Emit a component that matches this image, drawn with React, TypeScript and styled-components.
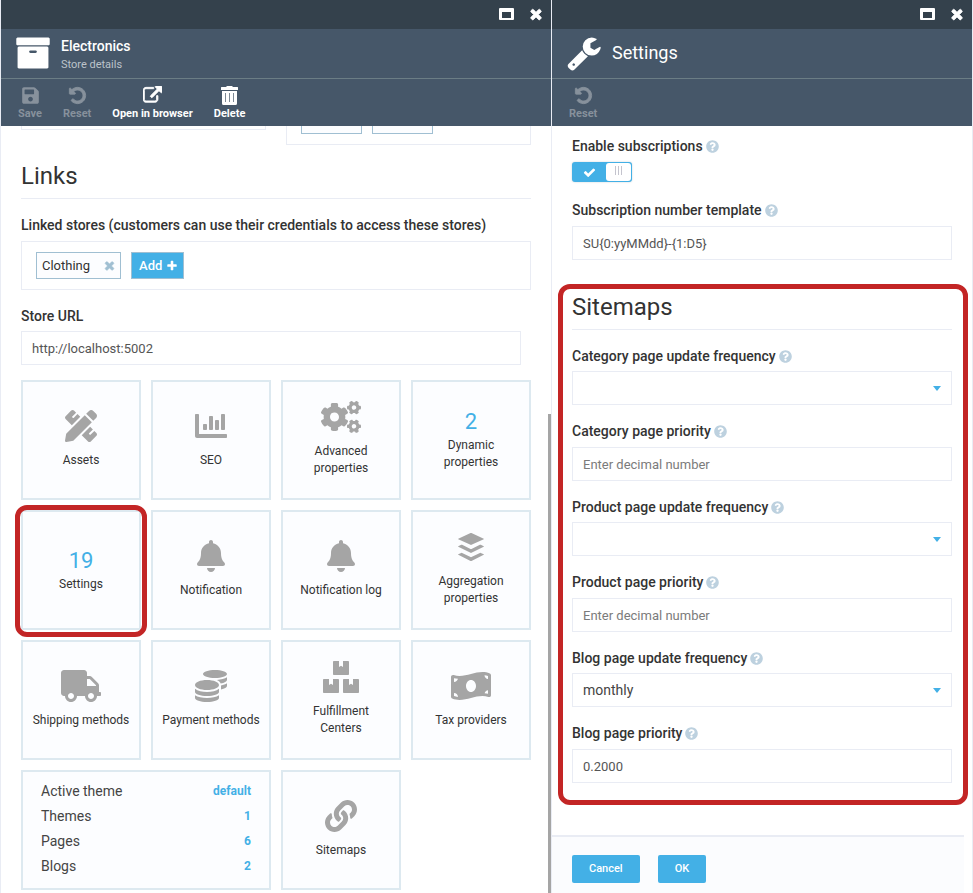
import React from "react";
import styled, { createGlobalStyle, css } from "styled-components";
import {
  FaBell,
  FaBoxes,
  FaBuffer,
  FaChartBar,
  FaCogs,
  FaCoins,
  FaLink,
  FaMoneyBillWave,
  FaPencilRuler,
  FaQuestionCircle,
  FaSave,
  FaTruck,
} from "react-icons/fa";

const color = {
  bar: "#34414c",
  head: "#465769",
  headLine: "#6b7d85",
  line: "#e9ecf4",
  tileLine: "#dde9f0",
  tileBg: "#fcfdff",
  blue: "#43b0e6",
  mist: "#bdd1df",
  chipLine: "#a0bfd2",
  icon: "#a5a5a5",
  text: "#333333",
  inputText: "#555555",
  red: "#c32525",
};

const GlobalStyle = createGlobalStyle`
  *, *::before, *::after { box-sizing: border-box; }
  body { margin: 0; background: #fff; color: ${color.text}; font: 14px/20px Roboto, "Liberation Sans", sans-serif; }
  button, input, select { font-family: inherit; margin: 0; }
  h1, h2, p { margin: 0; }
`;

const highlight = css`
  position: relative;
  &::after {
    content: "";
    position: absolute;
    border: 5px solid ${color.red};
    border-radius: 12px;
    pointer-events: none;
  }
`;

const Workspace = styled.main`
  display: grid;
  grid-template-columns: 551fr 422fr;
  height: 100vh;
  overflow: hidden;
`;

const Blade = styled.section<{ $last?: boolean }>`
  position: relative;
  display: flex;
  flex-direction: column;
  min-width: 0;
  min-height: 0;
  border-left: 1px solid ${color.line};
  border-right: ${(p) => (p.$last ? `1px solid ${color.line}` : "none")};
`;

const WindowBar = styled.div`
  display: flex;
  justify-content: flex-end;
  align-items: center;
  gap: 14px;
  height: 29px;
  flex: none;
  padding: 0 7px 2px;
  background: ${color.bar};
`;

const BarButton = styled.button`
  display: flex;
  padding: 0;
  border: 0;
  background: none;
  color: #fff;
  cursor: pointer;
`;

const BladeHead = styled.header`
  display: flex;
  align-items: center;
  gap: 10px;
  flex: none;
  height: 50px;
  padding: 0 14px 1px;
  border-bottom: 1px solid ${color.headLine};
  background: ${color.head};
  color: #fff;
`;

const Titles = styled.div`
  padding-top: 3px;
`;

const BladeTitle = styled.h1<{ $large?: boolean }>`
  font-size: ${(p) => (p.$large ? "18px" : "14px")};
  font-weight: ${(p) => (p.$large ? 400 : 500)};
  line-height: 20px;
`;

const BladeSubtitle = styled.p`
  font-size: 11px;
  line-height: 18px;
  color: #bcc3ca;
`;

const Toolbar = styled.div`
  display: flex;
  gap: 21px;
  flex: none;
  height: 47px;
  padding-left: 17px;
  background: ${color.head};
`;

const ToolButton = styled.button`
  display: flex;
  flex-direction: column;
  align-items: center;
  gap: 1px;
  padding: 6px 0 0;
  border: 0;
  background: none;
  color: #fff;
  font-size: 11px;
  font-weight: 700;
  line-height: 16px;
  cursor: pointer;
  &:disabled {
    color: #87919c;
    cursor: default;
  }
`;

const ToolIcon = styled.span`
  display: flex;
  align-items: center;
  height: 20px;
`;

const Content = styled.div`
  flex: 1;
  min-height: 0;
  padding: 0 20px;
  overflow: hidden;
`;

const SettingsContent = styled(Content)`
  padding-top: 10px;
  overflow: visible;
`;

const ScrollThumb = styled.div`
  position: absolute;
  right: 0;
  bottom: 0;
  top: 414px;
  width: 3px;
  background: #a5a5a5;
`;

const SplitRow = styled.div`
  display: grid;
  grid-template-columns: 1fr 1fr;
  align-items: start;
  gap: 20px;
`;

const CutBox = styled.div`
  display: flex;
  gap: 10px;
  min-height: 4px;
  padding: 0 14px;
  border: 1px solid ${color.line};
  border-top: 0;
`;

const CutBoxWithChips = styled(CutBox)`
  padding-bottom: 10px;
`;

const CutChip = styled.span`
  width: 61px;
  height: 8px;
  border: 1px solid ${color.chipLine};
  border-top: 0;
  background: ${color.tileBg};
`;

const SectionTitle = styled.h2`
  padding-bottom: 7px;
  margin-bottom: 16px;
  border-bottom: 1px solid ${color.line};
  font-size: 24px;
  font-weight: 400;
  line-height: 30px;
`;

const LinksSection = styled.div`
  padding-top: 16px;
`;

const FieldLabel = styled.label`
  display: flex;
  align-items: center;
  gap: 3px;
  font-size: 14px;
  font-weight: 500;
  line-height: 20px;
`;

const Help = styled(FaQuestionCircle)`
  color: ${color.mist};
  flex: none;
`;

const Field = styled.div<{ $gap: number; $after: number }>`
  display: flex;
  flex-direction: column;
  gap: ${(p) => p.$gap}px;
  margin-bottom: ${(p) => p.$after}px;
`;

const TextInput = styled.input`
  width: 100%;
  height: 34px;
  padding: 0 10px;
  border: 1px solid ${color.line};
  background: #fff;
  color: ${color.inputText};
  font-size: 13px;
  &::placeholder {
    color: #7b7b7b;
    opacity: 1;
  }
`;

const UrlInput = styled(TextInput)`
  width: calc(100% - 10px);
`;

const SelectWrap = styled.div`
  display: grid;
  align-items: center;
  > * {
    grid-area: 1 / 1;
  }
`;

const Select = styled.select`
  appearance: none;
  width: 100%;
  height: 34px;
  padding: 0 30px 1px 10px;
  border: 1px solid ${color.line};
  border-radius: 0;
  background: #fff;
  color: #444;
  font-size: 14px;
`;

const Caret = styled.svg`
  justify-self: end;
  margin-right: 11px;
  color: ${color.blue};
  pointer-events: none;
`;

const ChipBox = styled.div`
  display: flex;
  gap: 10px;
  padding: 10px 14px;
  border: 1px solid ${color.line};
`;

const Chip = styled.span`
  display: flex;
  align-items: center;
  gap: 13px;
  height: 27px;
  padding: 0 4px 0 5px;
  border: 1px solid ${color.chipLine};
  background: ${color.tileBg};
  font-size: 13px;
`;

const ChipRemove = styled(BarButton)`
  color: ${color.chipLine};
`;

const AddButton = styled.button`
  display: flex;
  align-items: center;
  gap: 4px;
  height: 27px;
  padding: 0 5px 0 7px;
  border: 1px solid ${color.chipLine};
  background: ${color.blue};
  color: #fff;
  font-size: 13px;
  font-weight: 500;
  cursor: pointer;
`;

const TileGrid = styled.div`
  display: grid;
  grid-template-columns: repeat(4, 1fr);
  grid-auto-rows: 120px;
  gap: 10px;
`;

const tileFrame = css`
  border: 2px solid ${color.tileLine};
  background: ${color.tileBg};
`;

const TileButton = styled.button<{ $marked?: boolean }>`
  ${tileFrame}
  display: flex;
  flex-direction: column;
  align-items: center;
  justify-content: center;
  padding: 0 6px 2px;
  color: ${color.text};
  font-size: 12px;
  line-height: 17px;
  cursor: pointer;
  ${(p) =>
    p.$marked &&
    css`
      ${highlight}
      &::after {
        inset: -7px -8px -9px;
      }
    `}
`;

const TileIcon = styled.span`
  display: flex;
  align-items: center;
  height: 32px;
  margin-bottom: 10px;
  color: ${color.icon};
`;

const TileCount = styled.span`
  color: ${color.blue};
  font-size: 22px;
  line-height: 30px;
`;

const TileLabel = styled.span`
  max-width: 100px;
`;

const ThemeTile = styled.div`
  ${tileFrame}
  grid-column: span 2;
  padding: 7px 18px;
`;

const ThemeRow = styled.div`
  display: flex;
  justify-content: space-between;
  line-height: 25px;
  color: #444;
`;

const ThemeLink = styled.a`
  color: ${color.blue};
  font-size: 12px;
  font-weight: 700;
  text-decoration: none;
`;

const Switch = styled.span`
  display: flex;
  align-items: center;
  width: 60px;
  height: 20px;
  padding: 1px;
  border-radius: 3px;
  background: ${color.blue};
  color: #fff;
  box-shadow: 0 0 2px #c9cdd2;
  position: relative;
`;

const SwitchInput = styled.input`
  position: absolute;
  inset: 0;
  width: 100%;
  height: 100%;
  margin: 0;
  opacity: 0;
  cursor: pointer;
`;

const SwitchOn = styled.span`
  display: flex;
  flex: 1;
  justify-content: center;
`;

const SwitchKnob = styled.span`
  display: flex;
  justify-content: center;
  gap: 2px;
  width: 25px;
  height: 18px;
  padding-top: 3px;
  border-radius: 3px;
  background: #fff;
`;

const Grip = styled.span`
  width: 1px;
  height: 9px;
  background: #c4c4ce;
`;

const MarkedSection = styled.div`
  ${highlight}
  margin-top: 32px;
  &::after {
    inset: -8px -16px -22px -14px;
  }
`;

const Footer = styled.footer`
  display: flex;
  gap: 18px;
  flex: none;
  margin-right: 8px;
  padding: 18px 20px 10px;
  border-top: 2px solid ${color.line};
  background: #fbfcfe;
`;

const FooterButton = styled.button`
  height: 28px;
  padding: 0 17px 1px;
  border: 0;
  border-radius: 2px;
  background: ${color.blue};
  color: #fff;
  font-size: 11px;
  font-weight: 500;
  cursor: pointer;
`;

const shapes = {
  times:
    "M1490 1322q0 40-28 68l-136 136q-28 28-68 28t-68-28l-294-294-294 294q-28 28-68 28t-68-28l-136-136q-28-28-28-68t28-68l294-294-294-294q-28-28-28-68t28-68l136-136q28-28 68-28t68 28l294 294 294-294q28-28 68-28t68 28l136 136q28 28 28 68t-28 68l-294 294 294 294q28 28 28 68z",
  archive:
    "M1088 832q0-26-19-45t-45-19h-256q-26 0-45 19t-19 45 19 45 45 19h256q26 0 45-19t19-45zm576-192v960q0 26-19 45t-45 19h-1408q-26 0-45-19t-19-45v-960q0-26 19-45t45-19h1408q26 0 45 19t19 45zm64-448v256q0 26-19 45t-45 19h-1536q-26 0-45-19t-19-45v-256q0-26 19-45t45-19h1536q26 0 45 19t19 45z",
  wrench:
    "M448 1472q0-26-19-45t-45-19-45 19-19 45 19 45 45 19 45-19 19-45zm644-420l-682 682q-37 37-90 37-52 0-91-37l-106-108q-38-36-38-90 0-53 38-91l681-681q39 98 114.500 173.500t173.500 114.500zm634-435q0 39-23 106-47 134-164.500 217.500t-258.500 83.500q-185 0-316.500-131.500t-131.500-316.500 131.500-316.500 316.500-131.500q58 0 121.500 16.500t107.500 46.500q16 11 16 28t-16 28l-293 169v224l193 107q5-3 79-48.500t135.500-81 70.500-35.500q15 0 23.500 10t8.500 25z",
  undo:
    "M1664 896q0 156-61 298t-164 245-245 164-298 61q-172 0-327-72.500t-264-204.500q-7-10-6.500-22.500t8.500-20.500l137-138q10-9 25-9 16 2 23 12 73 95 179 147t225 52q104 0 198.500-40.500t163.500-109.500 109.500-163.500 40.500-198.500-40.500-198.500-109.500-163.500-163.500-109.500-198.500-40.500q-98 0-188 35.500t-160 101.500l137 138q31 30 14 69-17 40-59 40h-448q-26 0-45-19t-19-45v-448q0-42 40-59 39-17 69 14l130 129q107-101 244.500-156.500t284.500-55.500q156 0 298 61t245 164 164 245 61 298z",
  external:
    "M1408 928v320q0 119-84.500 203.500t-203.500 84.500h-832q-119 0-203.500-84.500t-84.500-203.500v-832q0-119 84.500-203.500t203.500-84.500h704q14 0 23 9t9 23v64q0 14-9 23t-23 9h-704q-66 0-113 47t-47 113v832q0 66 47 113t113 47h832q66 0 113-47t47-113v-320q0-14 9-23t23-9h64q14 0 23 9t9 23zm384-864v512q0 26-19 45t-45 19-45-19l-176-176-652 652q-10 10-23 10t-23-10l-114-114q-10-10-10-23t10-23l652-652-176-176q-19-19-19-45t19-45 45-19h512q26 0 45 19t19 45z",
  plus:
    "M1600 736v192q0 40-28 68t-68 28h-416v416q0 40-28 68t-68 28h-192q-40 0-68-28t-28-68v-416h-416q-40 0-68-28t-28-68v-192q0-40 28-68t68-28h416v-416q0-40 28-68t68-28h192q40 0 68 28t28 68v416h416q40 0 68 28t28 68z",
  check:
    "M1671 566q0 40-28 68l-724 724-136 136q-28 28-68 28t-68-28l-136-136-362-362q-28-28-28-68t28-68l136-136q28-28 68-28t68 28l294 295 656-657q28-28 68-28t68 28l136 136q28 28 28 68z",
};

const Glyph = ({ name, size, bold }: { name: keyof typeof shapes; size: number; bold?: boolean }) => (
  <svg
    width={size}
    height={size}
    viewBox="0 0 1792 1792"
    fill="currentColor"
    stroke={bold ? "currentColor" : "none"}
    strokeWidth={80}
    aria-hidden="true"
  >
    <path d={shapes[name]} />
  </svg>
);

const MaximizeIcon = () => (
  <svg width="15" height="12" viewBox="0 0 15 12" fill="currentColor" fillRule="evenodd" aria-hidden="true">
    <path d="M1 0h13a1 1 0 0 1 1 1v10a1 1 0 0 1-1 1H1a1 1 0 0 1-1-1V1a1 1 0 0 1 1-1zM3 4v6h9V4z" />
  </svg>
);

const TrashIcon = () => (
  <svg width="17" height="19" viewBox="0 0 17 19" fillRule="evenodd" aria-hidden="true">
    <path
      fill="currentColor"
      d="M6 0h5l1 1h4.500a.5.5 0 0 1 .5.5V4H0V1.500A.5.5 0 0 1 .5 1H5zM1 5h15v12.500a1.500 1.500 0 0 1-1.500 1.500h-12A1.500 1.500 0 0 1 1 17.500z"
    />
    <path fill="#7d8995" d="M4 7h1v9H4zM8 7h1v9H8zM12 7h1v9h-1z" />
  </svg>
);

const WindowControls = () => (
  <WindowBar>
    <BarButton aria-label="Maximize">
      <MaximizeIcon />
    </BarButton>
    <BarButton aria-label="Close">
      <Glyph name="times" size={16} bold />
    </BarButton>
  </WindowBar>
);

const Tool = ({ label, disabled, children }: { label: string; disabled?: boolean; children: React.ReactNode }) => (
  <ToolButton disabled={disabled}>
    <ToolIcon>{children}</ToolIcon>
    {label}
  </ToolButton>
);

type TileProps = { label: string; icon?: React.ReactNode; count?: number; marked?: boolean };

const Tile = ({ label, icon, count, marked }: TileProps) => (
  <TileButton $marked={marked}>
    {icon ? <TileIcon>{icon}</TileIcon> : <TileCount>{count}</TileCount>}
    <TileLabel>{label}</TileLabel>
  </TileButton>
);

const tiles: TileProps[] = [
  { label: "Assets", icon: <FaPencilRuler size={32} /> },
  { label: "SEO", icon: <FaChartBar size={32} /> },
  { label: "Advanced properties", icon: <FaCogs size={40} /> },
  { label: "Dynamic properties", count: 2 },
  { label: "Settings", count: 19, marked: true },
  { label: "Notification", icon: <FaBell size={32} /> },
  { label: "Notification log", icon: <FaBell size={32} /> },
  { label: "Aggregation properties", icon: <FaBuffer size={32} /> },
  { label: "Shipping methods", icon: <FaTruck size={40} /> },
  { label: "Payment methods", icon: <FaCoins size={32} /> },
  { label: "Fulfillment Centers", icon: <FaBoxes size={36} /> },
  { label: "Tax providers", icon: <FaMoneyBillWave size={40} /> },
];

const themeRows = [
  { name: "Active theme", value: "default" },
  { name: "Themes", value: "1" },
  { name: "Pages", value: "6" },
  { name: "Blogs", value: "2" },
];

const StoreBlade = () => (
  <Blade>
    <WindowControls />
    <BladeHead>
      <Glyph name="archive" size={36} />
      <Titles>
        <BladeTitle>Electronics</BladeTitle>
        <BladeSubtitle>Store details</BladeSubtitle>
      </Titles>
    </BladeHead>
    <Toolbar>
      <Tool label="Save" disabled>
        <FaSave size={19} />
      </Tool>
      <Tool label="Reset" disabled>
        <Glyph name="undo" size={19} bold />
      </Tool>
      <Tool label="Open in browser">
        <Glyph name="external" size={19} bold />
      </Tool>
      <Tool label="Delete">
        <TrashIcon />
      </Tool>
    </Toolbar>
    <Content>
      <SplitRow>
        <CutBox />
        <CutBoxWithChips>
          <CutChip />
          <CutChip />
        </CutBoxWithChips>
      </SplitRow>
      <LinksSection>
        <SectionTitle>Links</SectionTitle>
        <Field $gap={6} $after={16}>
          <FieldLabel as="span">
            Linked stores (customers can use their credentials to access these stores)
          </FieldLabel>
          <ChipBox>
            <Chip>
              Clothing
              <ChipRemove aria-label="Remove Clothing">
                <Glyph name="times" size={13} bold />
              </ChipRemove>
            </Chip>
            <AddButton>
              Add <Glyph name="plus" size={12} />
            </AddButton>
          </ChipBox>
        </Field>
        <Field $gap={5} $after={15}>
          <FieldLabel htmlFor="store-url">Store URL</FieldLabel>
          <UrlInput id="store-url" defaultValue="http://localhost:5002" />
        </Field>
        <TileGrid>
          {tiles.map((t) => (
            <Tile key={t.label} {...t} />
          ))}
          <ThemeTile>
            {themeRows.map((r) => (
              <ThemeRow key={r.name}>
                {r.name}
                <ThemeLink href="#">{r.value}</ThemeLink>
              </ThemeRow>
            ))}
          </ThemeTile>
          <Tile label="Sitemaps" icon={<FaLink size={32} />} />
        </TileGrid>
      </LinksSection>
    </Content>
    <ScrollThumb />
  </Blade>
);

const InputField = ({ id, label, value, placeholder }: { id: string; label: string; value?: string; placeholder?: string }) => (
  <Field $gap={6} $after={16}>
    <FieldLabel htmlFor={id}>
      {label}
      <Help size={13} />
    </FieldLabel>
    <TextInput id={id} defaultValue={value} placeholder={placeholder} />
  </Field>
);

const SelectField = ({ id, label, value }: { id: string; label: string; value?: string }) => (
  <Field $gap={5} $after={16}>
    <FieldLabel htmlFor={id}>
      {label}
      <Help size={13} />
    </FieldLabel>
    <SelectWrap>
      <Select id={id} defaultValue={value ?? ""}>
        <option value="" />
        {value && <option value={value}>{value}</option>}
      </Select>
      <Caret width="8" height="5" viewBox="0 0 8 5" fill="currentColor" aria-hidden="true">
        <path d="M0 0h8L4 5z" />
      </Caret>
    </SelectWrap>
  </Field>
);

const SettingsBlade = () => (
  <Blade $last>
    <WindowControls />
    <BladeHead>
      <Glyph name="wrench" size={36} />
      <BladeTitle $large>Settings</BladeTitle>
    </BladeHead>
    <Toolbar>
      <Tool label="Reset" disabled>
        <Glyph name="undo" size={19} bold />
      </Tool>
    </Toolbar>
    <SettingsContent>
      <Field $gap={6} $after={18}>
        <FieldLabel htmlFor="subscriptions">
          Enable subscriptions
          <Help size={13} />
        </FieldLabel>
        <Switch>
          <SwitchOn>
            <Glyph name="check" size={13} />
          </SwitchOn>
          <SwitchKnob>
            <Grip />
            <Grip />
            <Grip />
          </SwitchKnob>
          <SwitchInput id="subscriptions" type="checkbox" role="switch" defaultChecked />
        </Switch>
      </Field>
      <InputField id="template" label="Subscription number template" value="SU{0:yyMMdd}-{1:D5}" />
      <MarkedSection>
        <SectionTitle>Sitemaps</SectionTitle>
        <SelectField id="category-frequency" label="Category page update frequency" />
        <InputField id="category-priority" label="Category page priority" placeholder="Enter decimal number" />
        <SelectField id="product-frequency" label="Product page update frequency" />
        <InputField id="product-priority" label="Product page priority" placeholder="Enter decimal number" />
        <SelectField id="blog-frequency" label="Blog page update frequency" value="monthly" />
        <InputField id="blog-priority" label="Blog page priority" value="0.2000" />
      </MarkedSection>
    </SettingsContent>
    <Footer>
      <FooterButton>Cancel</FooterButton>
      <FooterButton>OK</FooterButton>
    </Footer>
  </Blade>
);

export default function App() {
  return (
    <>
      <GlobalStyle />
      <Workspace>
        <StoreBlade />
        <SettingsBlade />
      </Workspace>
    </>
  );
}
